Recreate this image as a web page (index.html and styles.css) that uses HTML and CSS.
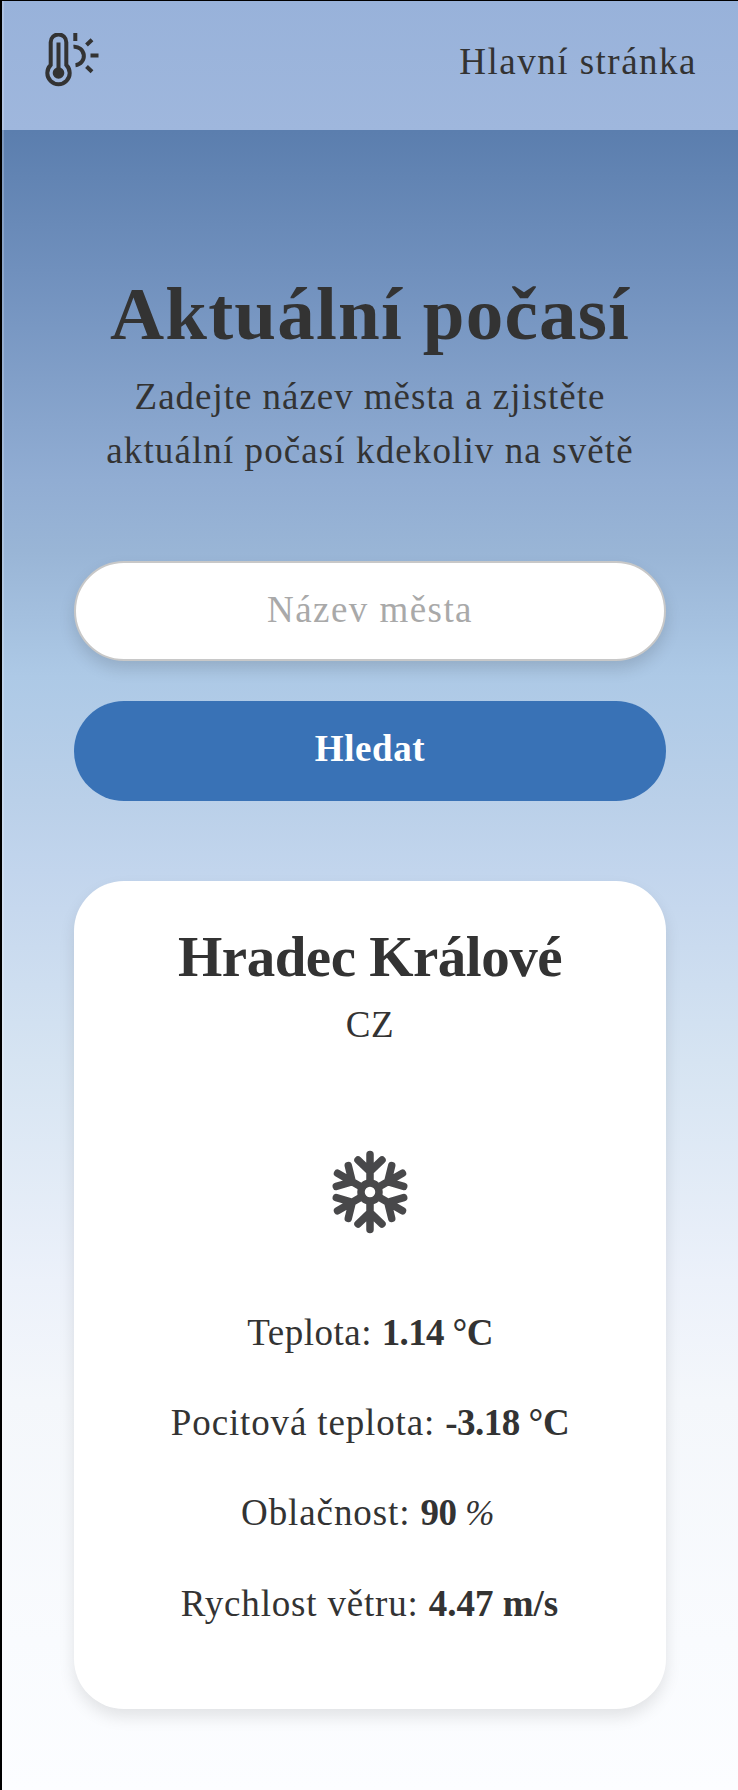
FILE: index.html
```html
<!DOCTYPE html>
<html lang="cs">
<head>
<meta charset="utf-8">
<title>Aktuální počasí</title>
<link rel="stylesheet" href="styles.css">
</head>
<body>
<div class="page">
  <header class="navbar">
    <svg class="logo" viewBox="0 0 54 54" fill="none" stroke="#333" stroke-width="4">
      <path d="M5.7 32V9.2a7.8 7.8 0 0 1 15.6 0V32a11.2 11.2 0 1 1-15.6 0z"/>
      <path d="M13.5 9.5V40"/>
      <circle cx="13.5" cy="40" r="5.8" fill="#333" stroke="none"/>
      <path d="M28.5 13.7a9.3 9.3 0 0 1 2 18.6M30.3 0v8M45.5 22.5h8M41.5 12l5.5-5.3M41.5 33.5l5.5 5.3"/>
    </svg>
    <a class="nav-link">Hlavní stránka</a>
  </header>
  <main class="content">
    <h1 class="title">Aktuální počasí</h1>
    <p class="subtitle"><span class="sub-first">Zadejte název města a zjistěte</span><br><span class="sub-second">aktuální počasí kdekoliv na světě</span></p>
    <form class="search">
      <input class="city-input" type="text" placeholder="Název města">
      <button class="search-button" type="button">Hledat</button>
    </form>
    <section class="card">
      <h2 class="city">Hradec Králové</h2>
      <p class="country">CZ</p>
      <svg class="snow" viewBox="-50 -50 100 100" fill="none" stroke="#48484a" stroke-width="7.5" stroke-linecap="round">
        <defs><path id="arm" d="M0-12V-37.5M-12-32L0-20.5L12-32"/></defs>
        <circle r="9"/>
        <use href="#arm"/><use href="#arm" transform="rotate(60)"/><use href="#arm" transform="rotate(120)"/>
        <use href="#arm" transform="rotate(180)"/><use href="#arm" transform="rotate(240)"/><use href="#arm" transform="rotate(300)"/>
      </svg>
      <div class="facts">
        <p class="fact temp">Teplota: <b>1.14 °C</b></p>
        <p class="fact feels">Pocitová teplota: <b>-3.18 °C</b></p>
        <p class="fact clouds">Oblačnost: <b>90 <i class="percent">%</i></b></p>
        <p class="fact wind">Rychlost větru: <b>4.47 m/s</b></p>
      </div>
    </section>
  </main>
</div>
</body>
</html>
```
FILE: styles.css
```css
* { box-sizing: border-box; margin: 0; padding: 0; }
body {
  font: 37px/54px Palatino, "Palatino Linotype", "Liberation Serif", serif;
  color: #333;
  background: #000;
}
.page {
  height: 1790px;
  border-top: 1px solid #000;
  border-left: 2px solid #000;
  background: linear-gradient(#5578a9 0, #5b7eae 130px, #7090bd 270px, #91add3 480px, #99b5d6 550px, #adc9e6 675px, #bad0e9 800px, #c2d5ed 870px, #d6e4f2 1060px, #ecf1fa 1280px, #f4f7fb 1400px, #f9fbfe 1640px, #fcfdff 1789px);
  box-shadow: inset 2px 0 rgba(255, 255, 255, .2);
}
.navbar {
  display: flex;
  justify-content: space-between;
  align-items: center;
  height: 129px;
  padding: 0 41px 8px 43px;
  background: linear-gradient(#98b2da, #9fb7dd);
  box-shadow: inset 2px 0 rgba(255, 255, 255, .2);
}
.logo { width: 54px; height: 54px; margin-bottom: 3px; }
.nav-link { letter-spacing: 1.5px; padding-top: 1px; }
.content { display: flex; flex-direction: column; padding: 139px 72px 0; text-align: center; }
.title { font-size: 75px; line-height: 90px; letter-spacing: 1.2px; margin-bottom: 11px; white-space: nowrap; }
.sub-first { letter-spacing: .97px; }
.sub-second { letter-spacing: 1.1px; }
.subtitle { white-space: nowrap; }
.search { display: grid; gap: 40px; margin: 83px 0 80px; }
.city-input, .search-button {
  width: 100%;
  height: 100px;
  border-radius: 50px;
  padding-bottom: 4px;
  text-align: center;
  font: inherit;
}
.city-input {
  border: 2px solid #c8c8c8;
  background: #fff;
  letter-spacing: 1.45px;
  box-shadow: 0 8px 16px rgba(0, 0, 0, .13);
}
.city-input::placeholder { color: #a9a9a9; }
.search-button { border: 0; background: #3972b6; color: #fff; font-weight: bold; letter-spacing: .6px; }
.card {
  height: 828px;
  padding-top: 43px;
  border-radius: 50px;
  background: #fff;
  box-shadow: 0 8px 16px rgba(0, 0, 0, .1);
}
.city { font-size: 57px; line-height: 66px; letter-spacing: -.5px; margin-bottom: 8px; }
.country { letter-spacing: .5px; }
.snow { display: block; width: 100px; height: 100px; margin: 90px auto 64px; }
.facts { display: grid; gap: 36px; }
.temp { letter-spacing: .5px; }
.temp b { letter-spacing: -.65px; }
.feels { letter-spacing: .86px; }
.feels b { letter-spacing: -.5px; }
.clouds { letter-spacing: .9px; padding-right: 5px; }
.clouds b { letter-spacing: -.5px; }
.wind { letter-spacing: .82px; padding-right: 1px; }
.wind b { letter-spacing: 0; }
.percent { font-size: 35px; font-weight: normal; }
```
